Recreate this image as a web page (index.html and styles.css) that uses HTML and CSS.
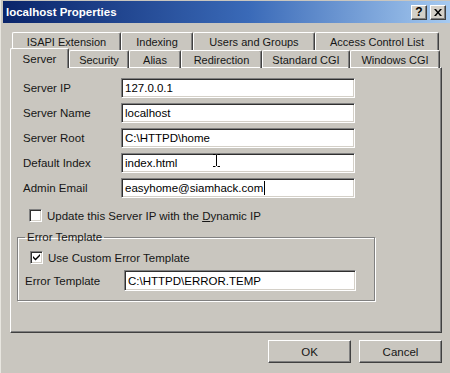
FILE: index.html
```html
<!DOCTYPE html>
<html lang="en">

<head>
    <meta charset="UTF-8">
    <title>localhost Properties</title>
    <link rel="stylesheet" href="styles.css">
</head>

<body>
    <div class="window">
        <div class="titlebar">
            <span class="title">localhost Properties</span>
            <div class="title-buttons">
                <span class="tbtn">?</span>
                <span class="tbtn">
                    <svg width="8" height="7" viewBox="0 0 8 7">
                        <path d="M0 0h2l2 2.5 2-2.5h2l-3 3.5 3 3.5h-2l-2-2.5-2 2.5h-2l3-3.5z" fill="#000"/>
                    </svg>
                </span>
            </div>
        </div>

        <div class="content">
            <div class="tabs">
                <div class="tab-row back">
                    <div class="tab" style="width:109px">ISAPI Extension</div>
                    <div class="tab" style="width:72px">Indexing</div>
                    <div class="tab" style="width:122px">Users and Groups</div>
                    <div class="tab" style="width:124px">Access Control List</div>
                </div>
                <div class="tab-row front">
                    <div class="tab active" style="width:59px">Server</div>
                    <div class="tab" style="width:60px">Security</div>
                    <div class="tab" style="width:52px">Alias</div>
                    <div class="tab" style="width:81px">Redirection</div>
                    <div class="tab" style="width:88px">Standard CGI</div>
                    <div class="tab" style="width:90px">Windows CGI</div>
                </div>
            </div>

            <div class="panel">
                <div class="fields">
                    <label>Server IP</label>
                    <div class="input">127.0.0.1</div>
                    <label>Server Name</label>
                    <div class="input">localhost</div>
                    <label>Server Root</label>
                    <div class="input">C:\HTTPD\home</div>
                    <label>Default Index</label>
                    <div class="input">index.html
                        <svg class="ibeam" width="7" height="13" viewBox="0 0 7 13">
                            <path d="M0 0.5h2.5M4.5 0.5h2.5M3.5 1v11M0 12.5h2.5M4.5 12.5h2.5" stroke="#000" fill="none"/>
                        </svg>
                    </div>
                    <label>Admin Email</label>
                    <div class="input">easyhome@siamhack.com<span class="caret"></span></div>
                </div>

                <div class="check-row">
                    <span class="checkbox"></span>
                    <span>Update this Server IP with the <u>D</u>ynamic IP</span>
                </div>

                <fieldset class="group">
                    <legend>Error Template</legend>
                    <div class="check-row inner">
                        <span class="checkbox">
                            <svg width="7" height="7" viewBox="0 0 7 7">
                                <path d="M0 2l2.5 2.5 4.5-4.5v2l-4.5 4.5-2.5-2.5z" fill="#000"/>
                            </svg>
                        </span>
                        <span>Use Custom Error Template</span>
                    </div>
                    <div class="group-field">
                        <label>Error Template</label>
                        <div class="input wide">C:\HTTPD\ERROR.TEMP</div>
                    </div>
                </fieldset>
            </div>

            <div class="footer">
                <div class="button">OK</div>
                <div class="button">Cancel</div>
            </div>
        </div>
    </div>
</body>

</html>
```

FILE: styles.css
```css
* {
    box-sizing: border-box;
    margin: 0;
    padding: 0;
}

body {
    background-color: #c9c6bf;
    font-family: "Liberation Sans", Arial, sans-serif;
    font-size: 11.5px;
    color: #161616;
}

.window {
    width: 450px;
    height: 373px;
    background-color: #c9c6bf;
    border-left: 1px solid #e8e6e0;
    padding-left: 2px;
    overflow: hidden;
}

.titlebar {
    height: 22px;
    margin-top: 1px;
    display: flex;
    align-items: center;
    justify-content: space-between;
    padding: 0 4px 0 3px;
    background: linear-gradient(to right, #0a246a, #3a6ab8 55%, #a6caf0);
}

.title {
    color: #ffffff;
    font-weight: bold;
    font-size: 11.5px;
}

.title-buttons {
    display: flex;
    gap: 3px;
}

.tbtn {
    width: 16px;
    height: 15px;
    display: flex;
    align-items: center;
    justify-content: center;
    background-color: #d4d0c8;
    border-top: 1px solid #ffffff;
    border-left: 1px solid #ffffff;
    border-right: 1px solid #404040;
    border-bottom: 1px solid #404040;
    box-shadow: inset -1px -1px 0 #808080;
    font-weight: bold;
    font-size: 12px;
    color: #000000;
}

.content {
    padding: 8px 8px 0 7px;
}

.tabs {
    display: flex;
    flex-direction: column;
}

.tab-row {
    display: flex;
    height: 18px;
}

.tab-row.back {
    margin-left: 2px;
}

.tab {
    height: 100%;
    display: flex;
    align-items: center;
    justify-content: center;
    font-size: 11px;
    border-top: 1px solid #ffffff;
    border-left: 1px solid #ffffff;
    border-right: 1px solid #404040;
    border-radius: 2px 2px 0 0;
    box-shadow: inset -1px 0 0 #808080;
    margin-top: 1px;
}

.tab.active {
    margin-top: -1px;
    height: 20px;
    position: relative;
    z-index: 2;
    background-color: #c9c6bf;
    margin-bottom: -1px;
    font-size: 11.5px;
}

.panel {
    height: 266px;
    border-top: 1px solid #ffffff;
    border-left: 1px solid #ffffff;
    border-right: 1px solid #404040;
    border-bottom: 1px solid #404040;
    box-shadow: inset -1px -1px 0 #808080;
    padding: 10px 0 0 12px;
}

.fields {
    display: grid;
    grid-template-columns: 98px 234px;
    grid-auto-rows: 20px;
    row-gap: 5px;
    align-items: center;
}

.input {
    height: 20px;
    display: flex;
    align-items: center;
    background-color: #ffffff;
    border-top: 1px solid #808080;
    border-left: 1px solid #808080;
    border-right: 1px solid #ffffff;
    border-bottom: 1px solid #ffffff;
    box-shadow: inset 1px 1px 0 #303030, inset -1px -1px 0 #d4d0c8;
    padding-left: 3px;
    color: #000000;
    position: relative;
}

.ibeam {
    position: absolute;
    left: 91px;
    top: 0px;
}

.caret {
    display: inline-block;
    width: 1px;
    height: 14px;
    background-color: #000000;
    margin-left: 1px;
}

.check-row {
    display: flex;
    align-items: center;
    gap: 5px;
    margin: 11px 0 0 6px;
}

.checkbox {
    width: 13px;
    height: 13px;
    display: flex;
    align-items: center;
    justify-content: center;
    background-color: #ffffff;
    border-top: 1px solid #808080;
    border-left: 1px solid #808080;
    border-right: 1px solid #ffffff;
    border-bottom: 1px solid #ffffff;
    box-shadow: inset 1px 1px 0 #303030, inset -1px -1px 0 #d4d0c8;
}

.group {
    width: 358px;
    height: 70px;
    margin: 9px 0 0 -6px;
    border: 1px solid #808080;
    box-shadow: 1px 1px 0 #ffffff, inset 1px 1px 0 #ffffff;
    padding: 0 0 0 7px;
}

.group legend {
    padding: 0 2px;
    margin-left: 0;
}

.check-row.inner {
    margin: 8px 0 0 5px;
}

.group-field {
    display: flex;
    align-items: center;
    margin-top: 6px;
}

.group-field label {
    width: 99px;
}

.input.wide {
    width: 232px;
    height: 21px;
}

.footer {
    display: flex;
    justify-content: flex-end;
    gap: 8px;
    padding: 7px 0 0 0;
}

.button {
    width: 83px;
    height: 23px;
    display: flex;
    align-items: center;
    justify-content: center;
    border-top: 1px solid #ffffff;
    border-left: 1px solid #ffffff;
    border-right: 1px solid #404040;
    border-bottom: 1px solid #404040;
    box-shadow: inset -1px -1px 0 #808080;
}
```
